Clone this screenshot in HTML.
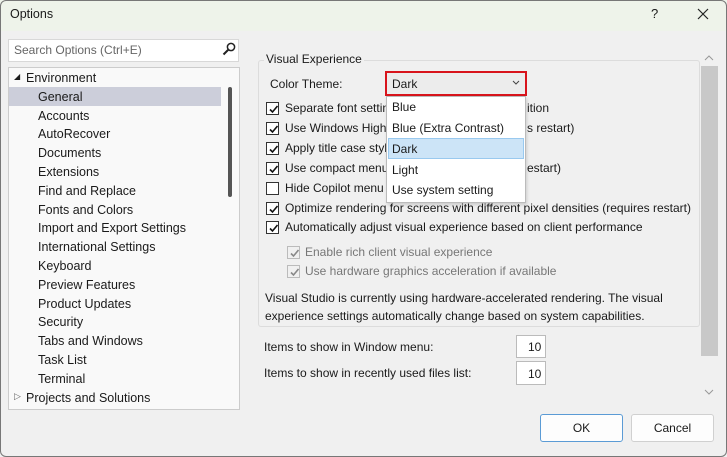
<!DOCTYPE html>
<html><head><style>
*{margin:0;padding:0;box-sizing:border-box}
body{width:727px;height:457px;background:#f0f0f0;font-family:"Liberation Sans",sans-serif;font-size:12px;color:#1a1a1a;position:relative;overflow:hidden}
.a{position:absolute;white-space:nowrap}
.cb{position:absolute;width:13px;height:13px;border:1px solid #333;background:#fff}
.cb svg{position:absolute;left:1px;top:1px}
.dis{border-color:#bbb;background:#f0f0f0}
.t{position:absolute;left:26px;line-height:18px}
</style></head><body>
<div class="a" style="left:0;top:0;width:727px;height:31px;background:#eef3ea"></div>
<div class="a" style="left:0;top:0;width:727px;height:457px;border:1px solid #777;border-radius:6px"></div>
<div class="a" style="left:10px;top:7px;font-size:12.5px">Options</div>
<div class="a" style="left:651px;top:6px;font-size:13px">?</div>
<svg class="a" style="left:697px;top:8px" width="12" height="12"><path d="M1 1L11 11M11 1L1 11" stroke="#222" stroke-width="1.2"/></svg>

<div class="a" style="left:8px;top:39px;width:231px;height:23px;background:#fff;border:1px solid #d8d8d8"></div>
<div class="a" style="left:14px;top:43px;color:#666">Search Options (Ctrl+E)</div>
<svg class="a" style="left:222px;top:42px" width="14" height="14"><circle cx="9" cy="5" r="3.6" fill="none" stroke="#222" stroke-width="1.5"/><path d="M6.5 7.5L1.5 12.5" stroke="#222" stroke-width="2"/></svg>

<div class="a" style="left:8px;top:67px;width:232px;height:343px;background:#f9f9f9;border:1px solid #ccc"></div>
<div class="a" style="left:9px;top:87px;width:212px;height:19px;background:#ccceda"></div>
<div class="a" style="left:228px;top:87px;width:4px;height:110px;background:#555;border-radius:2px"></div>
<div class="a" style="left:12px;top:69px;font-size:12.5px">
<div style="position:absolute;left:2px;top:3px;font-size:8px">◢</div>
<div class="t" style="left:14px;top:0">Environment</div>
<div class="t" style="top:18.8px">General</div>
<div class="t" style="top:37.6px">Accounts</div>
<div class="t" style="top:56.4px">AutoRecover</div>
<div class="t" style="top:75.2px">Documents</div>
<div class="t" style="top:94px">Extensions</div>
<div class="t" style="top:112.8px">Find and Replace</div>
<div class="t" style="top:131.6px">Fonts and Colors</div>
<div class="t" style="top:150.4px">Import and Export Settings</div>
<div class="t" style="top:169.2px">International Settings</div>
<div class="t" style="top:188px">Keyboard</div>
<div class="t" style="top:206.8px">Preview Features</div>
<div class="t" style="top:225.6px">Product Updates</div>
<div class="t" style="top:244.4px">Security</div>
<div class="t" style="top:263.2px">Tabs and Windows</div>
<div class="t" style="top:282px">Task List</div>
<div class="t" style="top:300.8px">Terminal</div>
<div style="position:absolute;left:2px;top:322px;font-size:9px;color:#666">▷</div>
<div class="t" style="left:14px;top:319.6px">Projects and Solutions</div>
</div>

<div class="a" style="left:701px;top:66px;width:17px;height:290px;background:#c8c8c8"></div>
<svg class="a" style="left:704px;top:54px" width="10" height="7"><path d="M1 6L5 2L9 6" fill="none" stroke="#999"/></svg>
<svg class="a" style="left:704px;top:389px" width="10" height="7"><path d="M1 1L5 5L9 1" fill="none" stroke="#999"/></svg>

<div class="a" style="left:258px;top:60px;width:442px;height:267px;border:1px solid #dcdcdc;border-radius:3px"></div>
<div class="a" style="left:264px;top:52px;background:#f0f0f0;padding:0 2px">Visual Experience</div>
<div class="a" style="left:270px;top:77px">Color Theme:</div>
<div class="a" style="left:385px;top:71px;width:142px;height:25px;border:2px solid #d8141c;background:#ececec"></div>
<div class="a" style="left:392px;top:77px">Dark</div>
<svg class="a" style="left:512px;top:80px" width="8" height="5"><path d="M1 1L4 4L7 1" fill="none" stroke="#444"/></svg>

<div class="cb" style="left:266px;top:102px"><svg width="11" height="11"><path d="M2 5.5L4.5 8L9.5 2" fill="none" stroke="#111" stroke-width="1.6"/></svg></div>
<div class="a" style="left:285px;top:101px">Separate font settings</div>
<div class="a" style="left:527px;top:101px">ition</div>
<div class="cb" style="left:266px;top:122px"><svg width="11" height="11"><path d="M2 5.5L4.5 8L9.5 2" fill="none" stroke="#111" stroke-width="1.6"/></svg></div>
<div class="a" style="left:285px;top:121px">Use Windows High</div>
<div class="a" style="left:527px;top:121px">s restart)</div>
<div class="cb" style="left:266px;top:142px"><svg width="11" height="11"><path d="M2 5.5L4.5 8L9.5 2" fill="none" stroke="#111" stroke-width="1.6"/></svg></div>
<div class="a" style="left:285px;top:141px">Apply title case style</div>
<div class="cb" style="left:266px;top:162px"><svg width="11" height="11"><path d="M2 5.5L4.5 8L9.5 2" fill="none" stroke="#111" stroke-width="1.6"/></svg></div>
<div class="a" style="left:285px;top:161px">Use compact menu</div>
<div class="a" style="left:527px;top:161px">estart)</div>
<div class="cb" style="left:266px;top:182px"></div>
<div class="a" style="left:285px;top:181px">Hide Copilot menu</div>
<div class="cb" style="left:266px;top:202px"><svg width="11" height="11"><path d="M2 5.5L4.5 8L9.5 2" fill="none" stroke="#111" stroke-width="1.6"/></svg></div>
<div class="a" style="left:285px;top:201px">Optimize rendering for screens with different pixel densities (requires restart)</div>
<div class="cb" style="left:266px;top:221px"><svg width="11" height="11"><path d="M2 5.5L4.5 8L9.5 2" fill="none" stroke="#111" stroke-width="1.6"/></svg></div>
<div class="a" style="left:285px;top:220px">Automatically adjust visual experience based on client performance</div>
<div class="cb dis" style="left:287px;top:246px"><svg width="11" height="11"><path d="M2 5.5L4.5 8L9.5 2" fill="none" stroke="#888" stroke-width="1.6"/></svg></div>
<div class="a" style="left:305px;top:245px;color:#777">Enable rich client visual experience</div>
<div class="cb dis" style="left:287px;top:265px"><svg width="11" height="11"><path d="M2 5.5L4.5 8L9.5 2" fill="none" stroke="#888" stroke-width="1.6"/></svg></div>
<div class="a" style="left:305px;top:264px;color:#777">Use hardware graphics acceleration if available</div>
<div class="a" style="left:265px;top:289px;line-height:18px">Visual Studio is currently using hardware-accelerated rendering. The visual<br>experience settings automatically change based on system capabilities.</div>

<div class="a" style="left:386px;top:96px;width:140px;height:107px;background:#fff;border:1px solid #bbb;box-shadow:1px 2px 3px rgba(0,0,0,.15)"></div>
<div class="a" style="left:388px;top:138px;width:136px;height:21px;background:#cce4f7;border:1px solid #99c9ef"></div>
<div class="a" style="left:392px;top:100px">Blue</div>
<div class="a" style="left:392px;top:121px">Blue (Extra Contrast)</div>
<div class="a" style="left:392px;top:142px">Dark</div>
<div class="a" style="left:392px;top:163px">Light</div>
<div class="a" style="left:392px;top:183px">Use system setting</div>

<div class="a" style="left:264px;top:340px">Items to show in Window menu:</div>
<div class="a" style="left:516px;top:335px;width:30px;height:23px;background:#fff;border:1px solid #bbb"></div>
<div class="a" style="left:528px;top:340px">10</div>
<div class="a" style="left:264px;top:366px">Items to show in recently used files list:</div>
<div class="a" style="left:516px;top:361px;width:30px;height:24px;background:#fff;border:1px solid #bbb"></div>
<div class="a" style="left:528px;top:367px">10</div>

<div class="a" style="left:540px;top:414px;width:83px;height:28px;background:#fdfdfd;border:1px solid #5b9bd5;border-radius:3px;text-align:center;line-height:26px">OK</div>
<div class="a" style="left:631px;top:414px;width:83px;height:28px;background:#fdfdfd;border:1px solid #d0d0d0;border-radius:3px;text-align:center;line-height:26px">Cancel</div>
</body></html>
